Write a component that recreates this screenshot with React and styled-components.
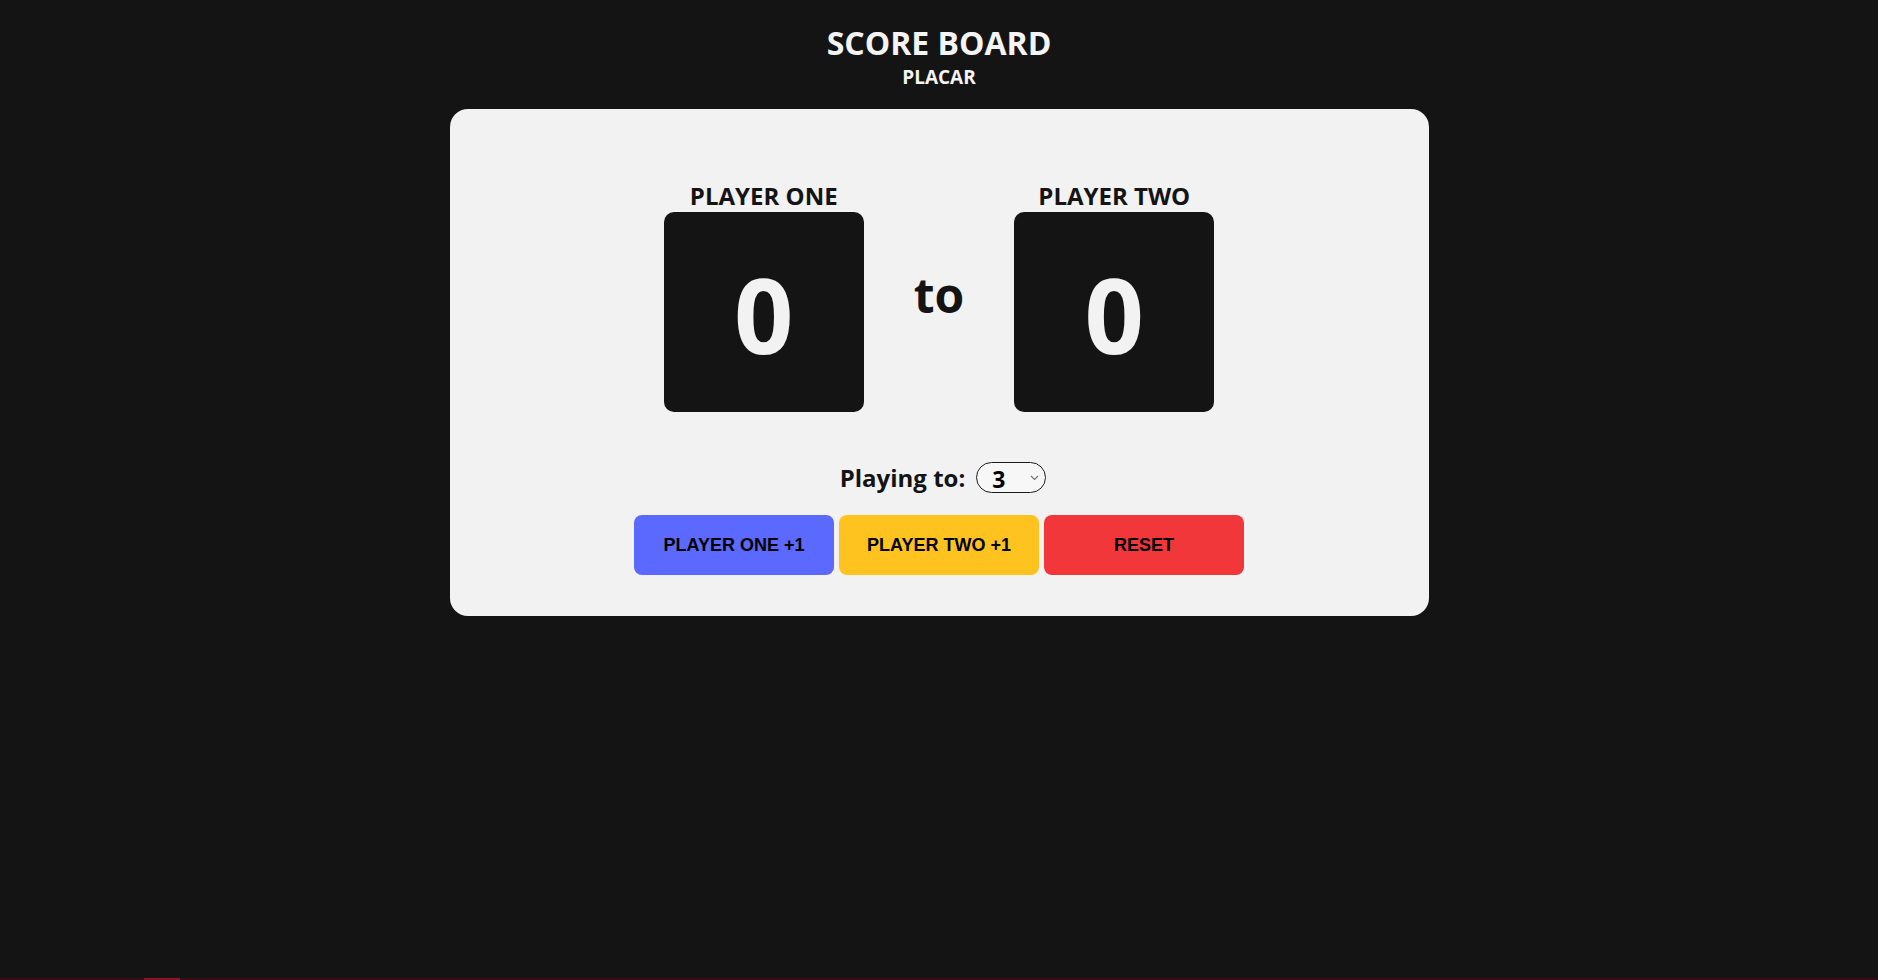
import React, { useState } from 'react';
import styled, { createGlobalStyle } from 'styled-components';

const GlobalStyle = createGlobalStyle`
  html, body {
    margin: 0;
    padding: 0;
    background: #141414;
  }
  body {
    font-family: "Open Sans", "Liberation Sans", sans-serif;
  }
`;

const Page = styled.div`
  min-height: 100vh;
  display: flex;
  flex-direction: column;
  align-items: center;
  box-sizing: border-box;
`;

const Header = styled.header`
  padding-top: 21px;
  padding-bottom: 20px;
  text-align: center;
  color: #f4f4f4;
`;

const Title = styled.h1`
  margin: 0;
  font-size: 32px;
  font-weight: 700;
  line-height: 44px;
`;

const Subtitle = styled.h2`
  margin: 0;
  font-size: 19px;
  font-weight: 700;
  line-height: 24px;
`;

const Card = styled.main`
  width: 979px;
  box-sizing: border-box;
  background: #f2f2f2;
  border-radius: 18px;
  padding: 70px 0 41px;
  display: flex;
  flex-direction: column;
  align-items: center;
`;

const Scores = styled.div`
  display: flex;
  align-items: center;
  gap: 50px;
`;

const Player = styled.div`
  display: flex;
  flex-direction: column;
  align-items: center;
`;

const PlayerName = styled.h3`
  margin: 0;
  font-size: 24px;
  font-weight: 700;
  line-height: 33px;
  color: #141414;
`;

const ScoreBox = styled.div`
  width: 200px;
  height: 200px;
  border-radius: 10px;
  background: #141414;
  color: #f2f2f2;
  display: flex;
  align-items: center;
  justify-content: center;
  font-size: 104px;
  font-weight: 700;
  line-height: 1;
  padding-top: 4px;
  box-sizing: border-box;
`;

const To = styled.span`
  font-size: 48px;
  font-weight: 700;
  color: #141414;
  padding-bottom: 2px;
`;

const PlayingRow = styled.div`
  margin-top: 49px;
  padding-left: 8px;
  display: flex;
  align-items: center;
  gap: 11px;
`;

const PlayingLabel = styled.label`
  font-size: 24px;
  font-weight: 700;
  line-height: 33px;
  color: #141414;
`;

const SelectWrap = styled.div`
  position: relative;
  width: 70px;
  height: 31px;
`;

const Select = styled.select`
  appearance: none;
  -webkit-appearance: none;
  width: 100%;
  height: 100%;
  box-sizing: border-box;
  border: 1px solid #1c1c1c;
  border-radius: 16px;
  background: #f7f7f7;
  color: #000;
  font-family: "Open Sans", "Liberation Sans", sans-serif;
  font-size: 23px;
  font-weight: 700;
  padding: 0 0 0 15px;
  outline: none;
`;

const Chevron = styled.svg`
  position: absolute;
  right: 7px;
  top: 13px;
  pointer-events: none;
`;

const Buttons = styled.div`
  margin-top: 21px;
  display: flex;
  gap: 5px;
`;

const colors = {
  blue: '#5c69ff',
  yellow: '#ffc31f',
  red: '#f2373a',
};

const Button = styled.button`
  width: 200px;
  height: 60px;
  border: none;
  border-radius: 8px;
  background: ${(p) => colors[p.$tone]};
  color: #000;
  font-family: "Liberation Sans", Arial, sans-serif;
  font-size: 18px;
  font-weight: 700;
  text-transform: uppercase;
  cursor: pointer;
`;

const Spacer = styled.div`
  flex: 1;
`;

const BottomBar = styled.div`
  align-self: stretch;
  height: 2px;
  background: #3b0b12;
  display: flex;
`;

const BottomMark = styled.div`
  margin-left: 144px;
  width: 36px;
  background: #8c1322;
`;

export default function App() {
  const [p1, setP1] = useState(0);
  const [p2, setP2] = useState(0);
  const [target, setTarget] = useState('3');

  return (
    <Page>
      <GlobalStyle />
      <Header>
        <Title>SCORE BOARD</Title>
        <Subtitle>PLACAR</Subtitle>
      </Header>
      <Card>
        <Scores>
          <Player>
            <PlayerName>PLAYER ONE</PlayerName>
            <ScoreBox>{p1}</ScoreBox>
          </Player>
          <To>to</To>
          <Player>
            <PlayerName>PLAYER TWO</PlayerName>
            <ScoreBox>{p2}</ScoreBox>
          </Player>
        </Scores>
        <PlayingRow>
          <PlayingLabel htmlFor="playto">Playing to:</PlayingLabel>
          <SelectWrap>
            <Select id="playto" value={target} onChange={(e) => setTarget(e.target.value)}>
              {[3, 4, 5, 6, 7, 8, 9, 10].map((n) => (
                <option key={n} value={n}>{n}</option>
              ))}
            </Select>
            <Chevron width="9" height="6" viewBox="0 0 9 6">
              <path d="M1 1l3.5 3.5L8 1" fill="none" stroke="#777" strokeWidth="1.2" />
            </Chevron>
          </SelectWrap>
        </PlayingRow>
        <Buttons>
          <Button $tone="blue" onClick={() => setP1(p1 + 1)}>Player One +1</Button>
          <Button $tone="yellow" onClick={() => setP2(p2 + 1)}>Player Two +1</Button>
          <Button $tone="red" onClick={() => { setP1(0); setP2(0); }}>Reset</Button>
        </Buttons>
      </Card>
      <Spacer />
      <BottomBar>
        <BottomMark />
      </BottomBar>
    </Page>
  );
}
